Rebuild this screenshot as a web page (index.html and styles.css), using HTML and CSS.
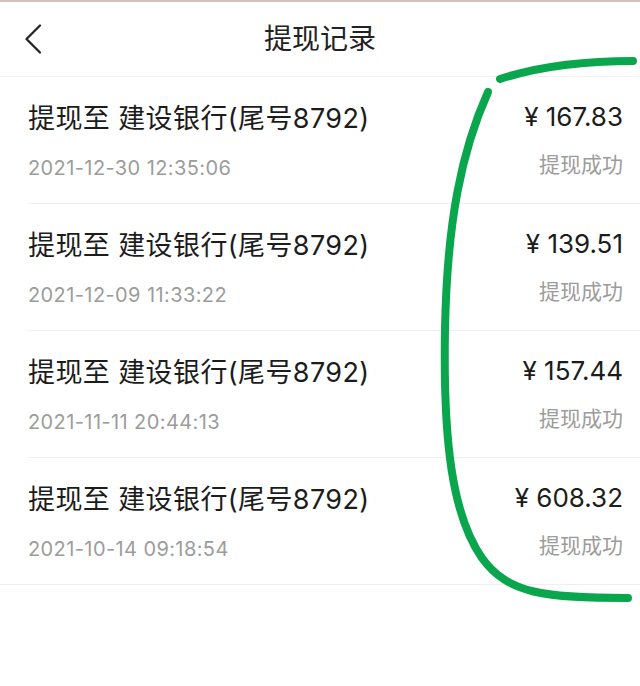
FILE: index.html
```html
<!DOCTYPE html>
<html>
	<head>
		<meta charset="utf-8">
		<meta name="viewport" content="width=device-width, initial-scale=1">
		<title>提现记录</title>
		<link rel="stylesheet" href="styles.css">
	</head>
	<body>
		<div class="page">
			<div class="header">
				<div class="back">
					<svg width="20" height="30" viewBox="0 0 20 30"><polyline points="15,1.5 1.5,15 15,28.5" fill="none" stroke="#222" stroke-width="2.2" stroke-linecap="round" stroke-linejoin="round"/></svg>
				</div>
				<h1>提现记录</h1>
				<div class="back-space"></div>
			</div>
			<ul class="records">
				<li class="record">
					<div class="info">
						<div class="name">提现至 建设银行(尾号8792)</div>
						<div class="time">2021-12-30 12:35:06</div>
					</div>
					<div class="money">
						<div class="amount">¥ 167.83</div>
						<div class="status">提现成功</div>
					</div>
				</li>
				<li class="record">
					<div class="info">
						<div class="name">提现至 建设银行(尾号8792)</div>
						<div class="time">2021-12-09 11:33:22</div>
					</div>
					<div class="money">
						<div class="amount">¥ 139.51</div>
						<div class="status">提现成功</div>
					</div>
				</li>
				<li class="record">
					<div class="info">
						<div class="name">提现至 建设银行(尾号8792)</div>
						<div class="time">2021-11-11 20:44:13</div>
					</div>
					<div class="money">
						<div class="amount">¥ 157.44</div>
						<div class="status">提现成功</div>
					</div>
				</li>
				<li class="record last">
					<div class="info">
						<div class="name">提现至 建设银行(尾号8792)</div>
						<div class="time">2021-10-14 09:18:54</div>
					</div>
					<div class="money">
						<div class="amount">¥ 608.32</div>
						<div class="status">提现成功</div>
					</div>
				</li>
			</ul>
			<!-- hand drawn marker over the amounts -->
			<svg class="marker" width="640" height="686" viewBox="0 0 640 686">
				<path d="M500,79 C540,66 585,61 633,61" />
				<path d="M488,92 C462,150 447,220 445,330 C443,440 452,515 482,558 C508,594 545,598 628,598" />
			</svg>
		</div>
	</body>
</html>
```

FILE: styles.css
```css
body{
	margin: 0;
	background: #fff;
	font-family: Inter, "Noto Sans CJK SC", sans-serif;
	color: #1c1c1c;
}
.page{
	position: relative;
	width: 640px;
	height: 686px;
	overflow: hidden;
	border-top: 2px solid #d8c1bb;
	box-sizing: border-box;
}
.header{
	height: 74px;
	display: flex;
	align-items: center;
	border-bottom: 1px solid #f2f2f2;
}
.back{
	width: 60px;
	padding-left: 25px;
	box-sizing: border-box;
	display: flex;
	align-items: center;
}
.back svg{
	display: block;
}
.back-space{
	width: 60px;
}
h1{
	flex: 1;
	margin: 0;
	text-align: center;
	font-size: 28px;
	font-weight: 400;
	color: #222;
	line-height: 36px;
}
.records{
	list-style: none;
	margin: 0;
	padding: 0;
}
.record{
	display: flex;
	justify-content: space-between;
	padding: 24px 17px 21px 0;
	margin-left: 28px;
	border-bottom: 1px solid #f0f0f0;
}
.record.last{
	margin-left: 0;
	padding-left: 28px;
}
.name{
	font-size: 27px;
	line-height: 36px;
	letter-spacing: 0.4px;
	color: #1c1c1c;
}
.time{
	margin-top: 17px;
	font-size: 20px;
	line-height: 28px;
	letter-spacing: 0.4px;
	color: #9c9c9c;
}
.money{
	text-align: right;
	margin-top: -2px;
}
.amount{
	font-size: 26px;
	line-height: 36px;
	color: #1c1c1c;
}
.status{
	margin-top: 16px;
	font-size: 21px;
	line-height: 28px;
	color: #9c9c9c;
}
.marker{
	position: absolute;
	top: -2px;
	left: 0;
	pointer-events: none;
}
.marker path{
	fill: none;
	stroke: #0aa64e;
	stroke-width: 8;
	stroke-linecap: round;
}
```
